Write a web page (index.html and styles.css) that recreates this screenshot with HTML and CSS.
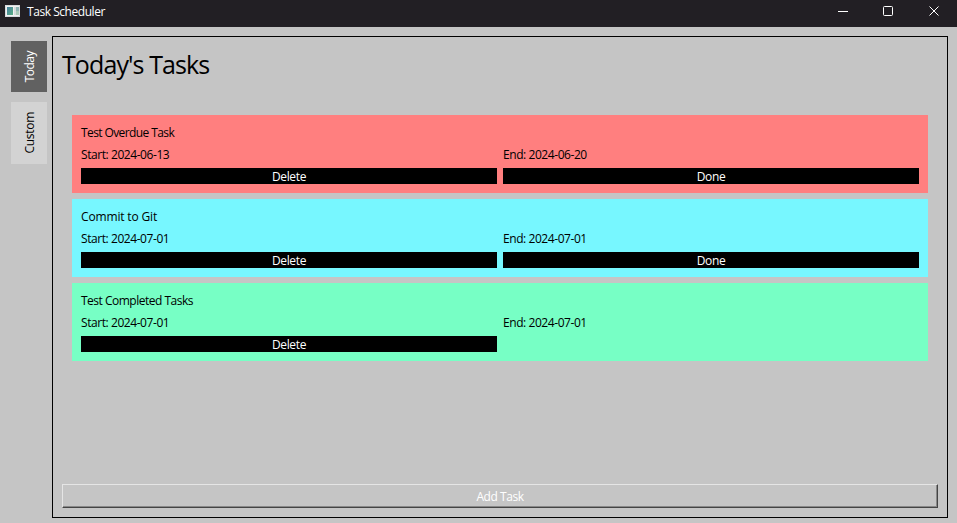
FILE: index.html
```html
<!DOCTYPE html>
<html lang="en">
<head>
<meta charset="utf-8">
<title>Task Scheduler</title>
<link rel="stylesheet" href="styles.css">
</head>
<body>
<header class="titlebar">
  <svg class="app-icon" width="15" height="12" viewBox="0 0 15 12">
    <defs><linearGradient id="g" x1="0" y1="0" x2="1" y2="1"><stop offset="0" stop-color="#4580a0"/><stop offset="1" stop-color="#59ad83"/></linearGradient></defs>
    <rect width="15" height="12" fill="#d6dade"/>
    <rect x="1" y="1" width="13" height="10" fill="#f1f1f1"/>
    <rect x="2" y="2" width="6" height="8" fill="url(#g)"/>
    <rect x="9" y="2" width="2" height="8" fill="#d5dcdc"/>
    <rect x="11" y="2" width="3" height="4" fill="#8fb5b5"/>
    <rect x="11" y="6" width="3" height="4" fill="#a9c9b8"/>
  </svg>
  <span class="app-name">Task Scheduler</span>
  <svg class="controls" width="102" height="12" viewBox="0 0 102 12" fill="none" stroke="#fff">
    <path d="M0 6.500h10"/>
    <rect x="45.500" y="1.500" width="9" height="9" rx="1"/>
    <path d="M91.500 1.500l9 9M100.500 1.500l-9 9"/>
  </svg>
</header>
<div class="window">
  <nav class="tabs">
    <button class="tab tab-active"><span>Today</span></button>
    <button class="tab tab-custom"><span>Custom</span></button>
  </nav>
  <main class="panel">
    <h1>Today's Tasks</h1>
    <section class="tasks">
      <article class="task overdue">
        <div class="name">Test Overdue Task</div>
        <div class="date">Start: 2024-06-13</div><div class="date">End: 2024-06-20</div>
        <button>Delete</button><button>Done</button>
      </article>
      <article class="task current">
        <div class="name">Commit to Git</div>
        <div class="date">Start: 2024-07-01</div><div class="date">End: 2024-07-01</div>
        <button>Delete</button><button>Done</button>
      </article>
      <article class="task completed">
        <div class="name">Test Completed Tasks</div>
        <div class="date">Start: 2024-07-01</div><div class="date">End: 2024-07-01</div>
        <button>Delete</button>
      </article>
    </section>
    <button class="add">Add Task</button>
  </main>
</div>
</body>
</html>
```
FILE: styles.css
```css
* { box-sizing: border-box; }
body {
  margin: 0;
  height: 523px;
  display: flex;
  flex-direction: column;
  overflow: hidden;
  background: #c5c5c5;
  color: #000;
  font: 12px/18px "Segoe UI", "Open Sans", "Noto Sans", sans-serif;
}
button { font: inherit; border: 0; padding: 0; border-radius: 0; }
.titlebar {
  height: 27px;
  flex: none;
  display: flex;
  align-items: flex-start;
  padding: 5px 17px 0 5px;
  background: #221f24;
  color: #fff;
}
.app-name { margin: -2px 0 0 7px; letter-spacing: -0.45px; }
.controls { margin-left: auto; }
.window { flex: 1; display: flex; padding: 9px 9px 5px 11px; }
.tabs { width: 36px; margin-right: 5px; padding-top: 5px; display: flex; flex-direction: column; gap: 10px; }
.tab { height: 51px; display: flex; align-items: center; justify-content: center; background: #d3d3d3; }
.tab span { writing-mode: vertical-rl; transform: rotate(180deg); margin-left: 2px; letter-spacing: -0.3px; }
.tab-active { background: #616161; color: #fff; }
.tab-active span { letter-spacing: -0.5px; }
.tab-custom { height: 62px; }
.panel {
  flex: 1;
  border: 1px solid #000;
  padding: 9px;
  display: flex;
  flex-direction: column;
}
h1 { margin: 0; height: 36px; font-size: 25px; line-height: 36px; font-weight: 400; letter-spacing: -0.9px; }
.tasks { padding: 33px 10px 0; display: flex; flex-direction: column; gap: 6px; }
.task {
  height: 78px;
  padding: 9px;
  display: grid;
  grid-template-columns: 1fr 1fr;
  grid-template-rows: 16px 16px 16px;
  gap: 6px;
}
.overdue { background: #ff7f7f; }
.current { background: #77f7ff; }
.completed { background: #77ffc5; }
.name { grid-column: 1 / 3; letter-spacing: -0.5px; }
.overdue .name { letter-spacing: -0.6px; }
.current .name { letter-spacing: -0.15px; }
.date { letter-spacing: -0.43px; }
.task button { background: #000; color: #fff; letter-spacing: -0.35px; padding-top: 1px; line-height: 16px; }
.add {
  margin-top: auto;
  height: 24px;
  padding-top: 2px;
  background: transparent;
  color: #fff;
  letter-spacing: -0.45px;
  border: 1px solid;
  border-color: #e5e5e5 #444 #444 #e5e5e5;
  box-shadow: inset -1px -1px #888;
}
```
